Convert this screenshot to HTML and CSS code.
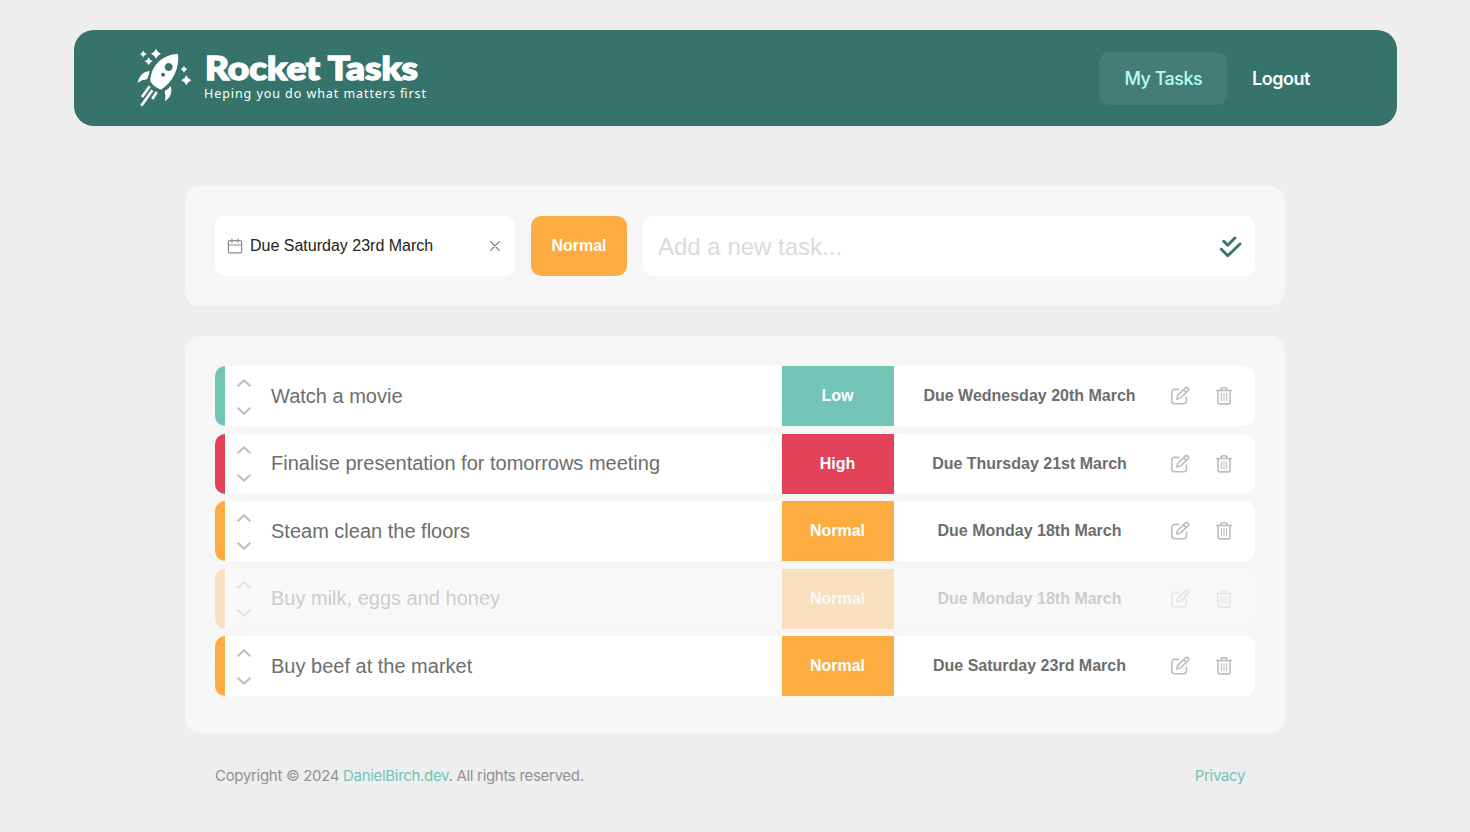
FILE: index.html
```html
<!DOCTYPE html>
<html lang="en">
<head>
<meta charset="utf-8">
<title>Rocket Tasks</title>
<link rel="stylesheet" href="styles.css">
</head>
<body>
<svg class="sprite" aria-hidden="true">
  <symbol id="up" viewBox="0 0 14 8"><path d="M1.2 6.8 7 1.3l5.8 5.5" fill="none" stroke="currentColor" stroke-width="2" stroke-linecap="round" stroke-linejoin="round"/></symbol>
  <symbol id="down" viewBox="0 0 14 8"><path d="M1.2 1.2 7 6.7l5.8-5.5" fill="none" stroke="currentColor" stroke-width="2" stroke-linecap="round" stroke-linejoin="round"/></symbol>
  <symbol id="edit" viewBox="0 0 20 20"><g fill="none" stroke="currentColor" stroke-width="1.6" stroke-linecap="round" stroke-linejoin="round"><path d="M8.7 3.4H4.5a2.7 2.7 0 0 0-2.7 2.7v9a2.7 2.7 0 0 0 2.7 2.7h9.2a2.7 2.7 0 0 0 2.7-2.7V11"/><path d="M6.8 13.1l.8-3.8 7.6-7.2a1.9 1.9 0 0 1 2.8 2.7l-7.5 7.2zM13.5 3.8l2.8 2.7"/></g></symbol>
  <symbol id="trash" viewBox="0 0 20 20"><g fill="none" stroke="currentColor" stroke-width="1.6" stroke-linecap="round" stroke-linejoin="round"><path d="M2.8 4.5h14.4M4 4.8v11.1a2 2 0 0 0 2 2h8a2 2 0 0 0 2-2V4.8M6.5 4.3C6.9 2.5 7.8 1.8 8.9 1.8h2.2c1.1 0 2 .7 2.4 2.5"/><path d="M7.4 7.5v7.3M10 7.5v7.3M12.6 7.5v7.3" stroke-width="1.1"/></g></symbol>
</svg>

<header class="header">
  <a class="brand">
    <svg class="rocket" viewBox="36 24 168 180" fill="currentColor">
      <path fill-rule="evenodd" d="M159 42C164 80 147 125 108 149Q87 143 76 124C77 76 114 43 159 42ZM131 69a12 12 0 1 0 .1 0ZM114 98a6 6 0 1 0 .1 0Z"/>
      <path d="M74 93C72 103 70 111 66 118Q51 119 38 128C44 106 54 95 74 93Z"/>
      <path d="M119 153Q130 148 137 138C143 157 136 172 120 184Q123 166 119 153Z"/>
      <path d="M74 139 51 171M82 151 49 197M95 156 82 177" fill="none" stroke="currentColor" stroke-width="8"/>
      <path d="M55 32Q58 39 65 42Q58 45 55 52Q52 45 45 42Q52 39 55 32Z"/>
      <path d="M93 26Q97 37 108 41Q97 45 93 56Q89 45 78 41Q89 37 93 26Z"/>
      <path d="M71 52Q74 61 83 64Q74 67 71 76Q68 67 59 64Q68 61 71 52Z"/>
      <path d="M177 78Q180 85 187 88Q180 91 177 98Q174 91 167 88Q174 85 177 78Z"/>
      <path d="M184 106Q188 117 199 121Q188 125 184 136Q180 125 169 121Q180 117 184 106Z"/>
    </svg>
    <svg class="wordmark" viewBox="0 0 232 60" role="img">
      <text class="wordmark-name" x="1" y="32" textLength="213" lengthAdjust="spacingAndGlyphs">Rocket Tasks</text>
      <text class="wordmark-tag" x="0" y="50" textLength="222" lengthAdjust="spacing">Heping you do what matters first</text>
    </svg>
  </a>
  <nav class="nav">
    <a class="nav-link nav-link-active">My Tasks</a>
    <a class="nav-link nav-link-logout">Logout</a>
  </nav>
</header>

<main class="main">
  <section class="panel add">
    <div class="date-field">
      <svg class="calendar" viewBox="0 0 16 16" fill="none" stroke="currentColor" stroke-width="1.2" stroke-linecap="round" stroke-linejoin="round"><rect x="1.4" y="2.6" width="13.2" height="12.2" rx="1.6"/><path d="M1.4 7h13.2M5 .9v3.4M11 .9v3.4"/></svg>
      <span class="date-text">Due Saturday 23rd March</span>
      <svg class="clear" viewBox="0 0 10 10" fill="none" stroke="currentColor" stroke-width="1.2" stroke-linecap="round"><path d="M.7.7l8.6 8.6M9.3.7.7 9.3"/></svg>
    </div>
    <div class="priority-button">Normal</div>
    <div class="task-field">
      <span class="placeholder">Add a new task...</span>
      <svg class="checks" viewBox="0 0 24 24" fill="none" stroke="currentColor" stroke-width="2.9" stroke-linecap="round" stroke-linejoin="round"><path d="M4.7 7.3l4 4L15.9 4M2.3 15.2l6.5 6.5L21 10"/></svg>
    </div>
  </section>

  <section class="panel list">
    <article class="task low">
      <div class="sort"><svg><use href="#up"/></svg><svg><use href="#down"/></svg></div>
      <div class="title">Watch a movie</div><div class="level">Low</div><div class="due">Due Wednesday 20th March</div>
      <div class="actions"><svg><use href="#edit"/></svg><svg><use href="#trash"/></svg></div>
    </article>
    <article class="task high">
      <div class="sort"><svg><use href="#up"/></svg><svg><use href="#down"/></svg></div>
      <div class="title">Finalise presentation for tomorrows meeting</div><div class="level">High</div><div class="due">Due Thursday 21st March</div>
      <div class="actions"><svg><use href="#edit"/></svg><svg><use href="#trash"/></svg></div>
    </article>
    <article class="task normal">
      <div class="sort"><svg><use href="#up"/></svg><svg><use href="#down"/></svg></div>
      <div class="title">Steam clean the floors</div><div class="level">Normal</div><div class="due">Due Monday 18th March</div>
      <div class="actions"><svg><use href="#edit"/></svg><svg><use href="#trash"/></svg></div>
    </article>
    <article class="task normal done">
      <div class="sort"><svg><use href="#up"/></svg><svg><use href="#down"/></svg></div>
      <div class="title">Buy milk, eggs and honey</div><div class="level">Normal</div><div class="due">Due Monday 18th March</div>
      <div class="actions"><svg><use href="#edit"/></svg><svg><use href="#trash"/></svg></div>
    </article>
    <article class="task normal">
      <div class="sort"><svg><use href="#up"/></svg><svg><use href="#down"/></svg></div>
      <div class="title">Buy beef at the market</div><div class="level">Normal</div><div class="due">Due Saturday 23rd March</div>
      <div class="actions"><svg><use href="#edit"/></svg><svg><use href="#trash"/></svg></div>
    </article>
  </section>
</main>

<footer class="footer">
  <span class="copyright">Copyright © 2024 <a>DanielBirch.dev</a>. All rights reserved.</span>
  <a class="privacy">Privacy</a>
</footer>
</body>
</html>
```
FILE: styles.css
```css
* { box-sizing: border-box; }
body {
  margin: 0;
  height: 832px;
  padding-top: 30px;
  overflow: hidden;
  background: #eeeeee;
  font-family: "Liberation Sans", Arial, sans-serif;
  white-space: nowrap;
}
svg { display: block; flex: none; }
.sprite { display: none; }

.header {
  width: 90%;
  height: 96px;
  margin: 0 auto;
  padding: 0 61.5px 0 63.5px;
  border-radius: 20px;
  background: #36736b;
  color: #fff;
  display: flex;
  align-items: center;
  justify-content: space-between;
}
.brand { display: flex; gap: 11px; }
.rocket { width: 56px; height: 60px; }
.wordmark { width: 232px; height: 60px; overflow: visible; fill: #fff; }
.wordmark-name { font: 900 33px Lato, sans-serif; stroke: #fff; stroke-width: 1.5px; }
.wordmark-tag { font: 400 12.5px "Noto Sans", sans-serif; }
.nav { display: flex; }
.nav-link {
  height: 53px;
  padding: 0 25px;
  border-radius: 10px;
  font: 500 18px/53px Inter, sans-serif;
}
.nav-link-active {
  width: 127.5px;
  letter-spacing: -0.5px;
  background: #447d76;
  color: #b3fff3;
}
.nav-link-logout { font-weight: 600; letter-spacing: -0.45px; }

.main {
  width: 1100px;
  margin: 60px auto 0;
  display: grid;
  gap: 30px;
}
.panel { padding: 30px; border-radius: 15px; background: #f6f6f6; }
.add { height: 120px; display: flex; gap: 16px; }
.date-field, .task-field {
  border-radius: 10px;
  background: #fff;
  display: flex;
  align-items: center;
}
.date-field { width: 300px; padding: 0 15px 0 12px; }
.calendar { width: 16px; height: 16px; color: #8d8d8d; }
.date-text { flex: 1; margin-left: 7px; font-size: 16px; color: #222; }
.clear { width: 10px; height: 10px; color: #777; }
.priority-button {
  width: 96px;
  border-radius: 10px;
  background: #fdac41;
  color: #fff;
  font-weight: 700;
  font-size: 16px;
  line-height: 60px;
  text-align: center;
}
.task-field { flex: 1; padding: 0 12px 0 15px; justify-content: space-between; }
.placeholder { padding-top: 1px; font-size: 24px; color: #dadada; }
.checks { width: 24px; height: 24px; color: #36736b; }

.list { height: 397px; display: flex; flex-direction: column; gap: 7.5px; }
.task {
  height: 60px;
  border-radius: 10px;
  overflow: hidden;
  background: #fff;
  border-left: 10px solid var(--level);
  display: grid;
  grid-template-columns: 36px 520.5px 112px 272px 1fr;
  align-items: center;
  color: #6d6d6d;
}
.low { --level: #72c5b6; }
.high { --level: #e24259; }
.normal { --level: #fdac41; }
.done { opacity: .3; }
.sort { display: grid; gap: 20px; padding: 1px 0 0 11.5px; color: #bdbdbd; }
.sort svg { width: 14px; height: 8px; }
.title { padding-left: 10px; font-size: 20px; }
.level, .due { font-weight: 700; font-size: 16px; text-align: center; }
.level { align-self: stretch; line-height: 60px; background: var(--level); color: #fff; }
.actions { display: flex; gap: 24px; padding-left: 4px; color: #bdbdbd; }
.actions svg { width: 20px; height: 20px; }

.footer {
  width: 1030px;
  margin: 33px 0 0 215px;
  display: flex;
  justify-content: space-between;
  font: 400 15px/20px Inter, sans-serif;
  color: #929292;
}
.footer a { color: #72c5b6; }
.copyright { letter-spacing: -0.31px; }
.privacy { letter-spacing: -0.35px; }
```
